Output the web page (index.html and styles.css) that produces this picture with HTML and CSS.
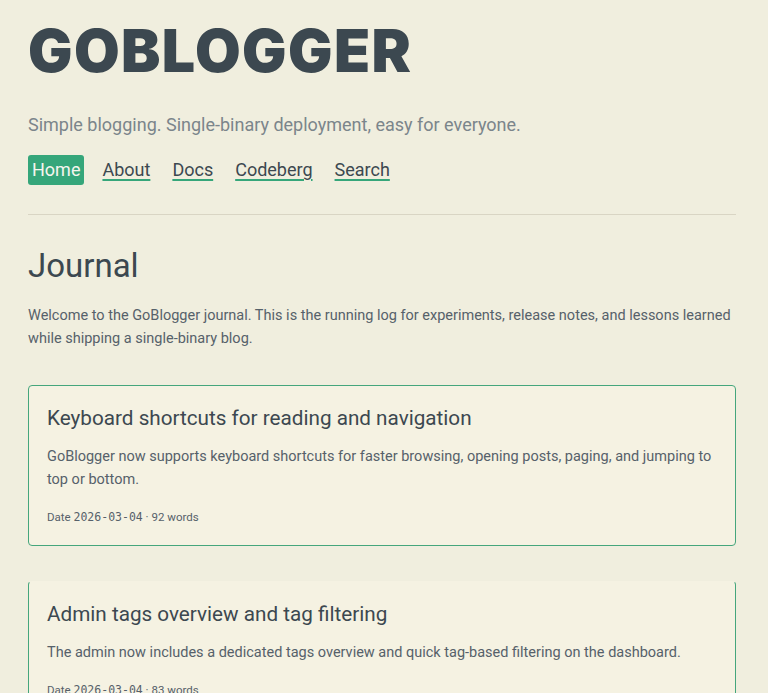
FILE: index.html
```html
<!DOCTYPE html>
<html lang="en">
<head>
<meta charset="utf-8">
<title>GoBlogger</title>
<link rel="stylesheet" href="styles.css">
</head>
<body>
<div class="page">
  <header class="site-header">
    <h1 class="brand">GOBLOGGER</h1>
    <p class="tagline">Simple blogging. Single-binary deployment, easy for everyone.</p>
    <nav class="nav">
      <a class="nav-link is-active" href="#">Home</a>
      <a class="nav-link" href="#">About</a>
      <a class="nav-link" href="#">Docs</a>
      <a class="nav-link" href="#">Codeberg</a>
      <a class="nav-link" href="#">Search</a>
    </nav>
  </header>
  <main class="content">
    <h2 class="page-title">Journal</h2>
    <p class="intro">Welcome to the GoBlogger journal. This is the running log for experiments, release notes, and lessons learned while shipping a single-binary blog.</p>
    <article class="card">
      <h3 class="card-title">Keyboard shortcuts for reading and navigation</h3>
      <p class="card-text">GoBlogger now supports keyboard shortcuts for faster browsing, opening posts, paging, and jumping to top or bottom.</p>
      <p class="card-meta">Date <time class="card-date">2026-03-04</time> · 92 words</p>
    </article>
    <article class="card card-fading">
      <h3 class="card-title">Admin tags overview and tag filtering</h3>
      <p class="card-text">The admin now includes a dedicated tags overview and quick tag-based filtering on the dashboard.</p>
      <p class="card-meta">Date <time class="card-date">2026-03-04</time> · 83 words</p>
    </article>
  </main>
</div>
</body>
</html>
```
FILE: styles.css
```css
html, body {
  margin: 0;
  padding: 0;
}
body {
  background: #f0eede;
  color: #3c4850;
  font-family: "Roboto", "Inter", sans-serif;
}
.page {
  padding: 0 32px 0 28px;
}
.site-header {
  padding-top: 21px;
  padding-bottom: 29px;
  border-bottom: 1px solid #d9d5c4;
}
.brand {
  margin: 0;
  font-family: "Inter", sans-serif;
  font-weight: 900;
  font-size: 59px;
  line-height: 60px;
  letter-spacing: 1.4px;
  color: #3c4850;
}
.tagline {
  margin: 32px 0 0;
  font-size: 18px;
  line-height: 24px;
  color: #7b858b;
}
.nav {
  display: flex;
  gap: 14px;
  margin-top: 18px;
  margin-left: -4px;
  align-items: center;
}
.nav-link {
  color: #3c4850;
  font-size: 18px;
  line-height: 24px;
  padding: 3px 4px;
  border-radius: 3px;
  text-decoration: underline;
  text-decoration-color: #35a67a;
  text-decoration-thickness: 2px;
  text-underline-offset: 3px;
}
.nav-link.is-active {
  background: #35a67a;
  color: #f5f5ee;
  text-decoration: none;
  margin-left: 4px;
  padding: 3px 4px;
}
.content {
  padding-top: 31px;
}
.page-title {
  margin: 0;
  font-size: 33px;
  font-weight: 400;
  line-height: 40px;
  color: #3c4850;
}
.intro {
  margin: 18px 0 35px;
  font-size: 14.5px;
  line-height: 23px;
  color: #56616a;
}
.card {
  background: #f5f2e2;
  border: 1px solid #45a67c;
  border-radius: 4px;
  padding: 18px 18px 19px;
  margin-bottom: 35px;
}
.card-fading {
  border-top-color: transparent;
}
.card-title {
  margin: 0;
  font-size: 20.7px;
  font-weight: 400;
  line-height: 28px;
  color: #3c4850;
}
.card-text {
  margin: 13px 0 0;
  font-size: 14.5px;
  line-height: 23px;
  color: #56616a;
}
.card-meta {
  margin: 17px 0 0;
  font-size: 11.5px;
  line-height: 18px;
  color: #56616a;
}
.card-date {
  font-family: "DejaVu Sans Mono", monospace;
  font-size: 11.5px;
}
```
